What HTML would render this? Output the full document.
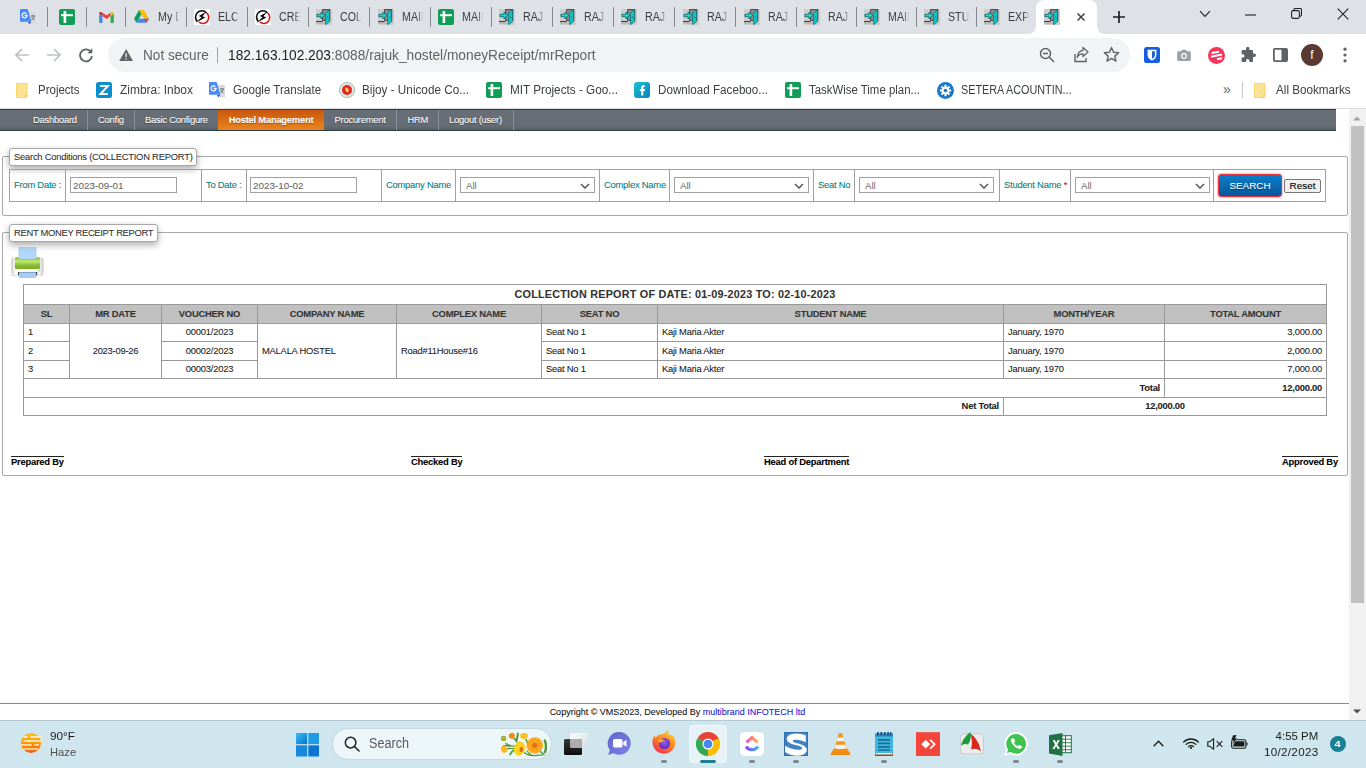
<!DOCTYPE html>
<html><head><meta charset="utf-8"><title>mrReport</title>
<style>
*{box-sizing:border-box;margin:0;padding:0}
html,body{width:1366px;height:768px;overflow:hidden;background:#fff;font-family:"Liberation Sans",Arial,sans-serif;}
.abs{position:absolute}
#tabstrip{position:absolute;left:0;top:0;width:1366px;height:34px;background:#dee1e6}
#toolbar{position:absolute;left:0;top:34px;width:1366px;height:74px;background:#fff}
.tab{position:absolute;top:0;height:34px;font-size:12px;color:#3c4043}
.tab .sep{position:absolute;left:0;top:8px;width:1px;height:19px;background:#80868b}
.tab .fav{position:absolute;top:9px;width:16px;height:16px}
.tab .tt{position:absolute;top:9px;left:40px;width:20px;overflow:hidden;white-space:nowrap;font-size:12.5px;line-height:16px;color:#3c4043;
 -webkit-mask-image:linear-gradient(90deg,#000 55%,transparent 100%);mask-image:linear-gradient(90deg,#000 55%,transparent 100%)}

.tsep{position:absolute;top:7px;width:1px;height:20px;background:#84888f}
.fav{position:absolute}
.tt{position:absolute;top:9px;height:16px;overflow:hidden;white-space:nowrap;font-size:12px;line-height:16px;color:#3c4043;transform:scaleX(.89);transform-origin:0 50%;-webkit-mask-image:linear-gradient(90deg,#000 72%,transparent 100%);mask-image:linear-gradient(90deg,#000 72%,transparent 100%)}
#atab{position:absolute;left:1036px;top:0;width:61px;height:34px;background:#fff;border-radius:8px 8px 0 0}
#atab .curveL{position:absolute;left:-8px;bottom:0}
#atab .curveR{position:absolute;right:-8px;bottom:0}
.ot{position:absolute;top:45px;transform-origin:0 50%;font-size:14px;line-height:20px;white-space:nowrap}
#avatar{left:1301px;top:44px;width:22px;height:22px;border-radius:11px;background:#5a3931;color:#fff;font-size:12px;line-height:23px;text-align:center}
#omni{position:absolute;left:108px;top:38px;width:1022px;height:34px;border-radius:17px;background:#f1f3f4}
.bm{position:absolute;top:82px;transform-origin:0 50%;font-size:12.3px;line-height:16px;color:#3c4043;white-space:nowrap}
.bmi{position:absolute;top:82px;width:16px;height:16px}
#page{position:absolute;left:0;top:108px;width:1349px;height:612px;background:#fff;overflow:hidden;-webkit-text-stroke:.08px;font-family:"Liberation Sans",Arial,sans-serif}
#menubar{position:absolute;left:0;top:1px;width:1336px;height:22px;background:linear-gradient(#676e76 0%,#666d75 78%,#595f66 100%);border-top:1px solid #2b3d48;border-bottom:1px solid #2b3d48}
.mi{position:absolute;top:0;height:20px;line-height:20px;font-size:9.4px;letter-spacing:-.225px;color:#fff;white-space:nowrap;text-shadow:0 1px 1px rgba(0,0,0,.4)}
.msep{position:absolute;top:0;width:1px;height:20px;background:#8d9299}
fieldset{position:absolute;border:1px solid #a9a9a9;border-radius:2px}
.legend{position:absolute;height:18px;line-height:16px;border:1px solid #a8a8a8;border-radius:3px;background:#fff;font-size:9.4px;letter-spacing:-.225px;color:#333;padding:0 3.5px 0 4px;white-space:nowrap;box-shadow:0 3px 7px rgba(0,0,0,.33)}

.mact{position:absolute;top:0;height:20px;background:linear-gradient(#c8560d,#e9861f);color:#fff;font-weight:bold;font-size:9.4px;letter-spacing:-.225px;line-height:20px;text-align:center;white-space:nowrap;text-shadow:0 1px 1px rgba(0,0,0,.35)}
#stable{position:absolute;left:9px;top:61px;width:1317px;height:33px}
.sc{position:absolute;top:0;height:33px;border:1px solid #a0a0a0}
.sl{position:absolute;top:0;line-height:30px;font-size:9.4px;letter-spacing:-.225px;color:#008080;white-space:nowrap}
.sl b{color:#e00;font-weight:normal}
.si{position:absolute;top:7px;width:107px;height:16px;border:1px solid #a0a0a0;font-family:"Liberation Sans",Arial,sans-serif;font-size:9.9px;color:#666;padding:0 2px;outline:none;background:#fff;border-radius:0}
.ss{position:absolute;top:7px;width:135px;height:16px;border:1px solid #a0a0a0;font-size:9.7px;line-height:15px;color:#777;padding-left:5px;background:#fff}
.ss svg{position:absolute;right:4px;top:4.5px;width:10px;height:6px}
.bsearch{position:absolute;left:4px;top:4px;width:64px;height:23px;border:1px solid #e8333a;border-radius:3px;background:linear-gradient(#0b7fcb,#04569b);color:#fff;font-family:"Liberation Sans",Arial,sans-serif;font-size:9.9px;text-shadow:0 1px 1px rgba(0,0,0,.4);box-shadow:0 0 2px #e8333a;padding:0}
.breset{position:absolute;left:70px;top:8.5px;width:37px;height:14.5px;border:1px solid #767676;border-radius:2px;background:#efefef;color:#000;font-family:"Liberation Sans",Arial,sans-serif;font-size:9.9px;padding:0;line-height:12px}
#foot{position:absolute;left:0;top:595px;width:1349px;height:17px;border-top:1px solid #8a8a8a;text-align:center;padding-left:6px;font-size:9px;line-height:17px;color:#111}
#foot a{color:#1a1ad6}

#rt{position:absolute;left:23px;top:176px;width:1304px;border-collapse:collapse;table-layout:fixed;font-size:9.4px;letter-spacing:-.225px;color:#222}
#rt td,#rt th{border:1px solid #999;padding:0 4px 2px;line-height:10px;text-align:left;vertical-align:middle;white-space:nowrap;overflow:hidden}
#rt .h19 td,#rt .h19 th{padding-bottom:1px}
#rt td[rowspan]{padding-bottom:.5px}
#rt th{background:#c0c0c0;text-align:center;font-weight:bold;color:#333}
#rt .c{text-align:center}#rt .r{text-align:right}#rt .b{font-weight:bold}
#rt .ttl{text-align:center;font-weight:bold;font-size:10.8px;letter-spacing:.225px;color:#333}
.sg{position:absolute;top:348px;font-size:9.4px;letter-spacing:-.225px;font-weight:bold;color:#000;border-top:1px solid #222;line-height:10px;white-space:nowrap}
#taskbar{position:absolute;left:0;top:720px;width:1366px;height:48px;background:#cfe6ee;box-shadow:inset 0 1px 0 #b4c8cf}
#scroll{position:absolute;left:1349px;top:109px;width:17px;height:611px;background:#f1f1f1}
#tbline{position:absolute;left:0;top:108px;width:1366px;height:1px;background:#dadce0}
</style></head><body>
<!--CHROME-START-->
<svg width="0" height="0" style="position:absolute"><defs>
<symbol id="door" viewBox="0 0 16 16"><rect width="16" height="16" fill="#cdcdcd"/><rect x="6.6" y=".6" width="7.2" height="10.8" fill="#8d8d8d" stroke="#3c3c3c" stroke-width=".9"/><path d="M0 12.6h6.6" stroke="#2e2e2e" stroke-width="1"/><path d="M0 14.2h9" stroke="#b5b5b5" stroke-width="1.4"/><path d="M9.3 4.2 L13.5 .7 V12.7 L9.7 15.6 Z" fill="#14c4c6" stroke="#087577" stroke-width=".8"/><circle cx="11.6" cy="8.3" r=".7" fill="#7a4a4a"/><path d="M.9 5.3h4.1V3.1l3.7 3.4L5 9.9V7.7H.9z" fill="#1ad9da" stroke="#0a6466" stroke-width=".8"/></symbol>
<symbol id="gx" viewBox="0 0 16 16"><rect width="16" height="16" rx="2" fill="#0f9d58"/><rect x="4.6" y="2" width="2.6" height="12" fill="#fff"/><rect x="2.1" y="5.2" width="11.9" height="2" fill="#fff"/></symbol>
<symbol id="bolt" viewBox="0 0 16 16"><rect width="16" height="16" fill="#fff"/><path d="M3.300 12.400 A6 6 0 0 1 12.400 3.700" fill="none" stroke="#0a0a0a" stroke-width="1.600"/><path d="M12.400 3.700 A6 6 0 0 1 5 13.200" fill="none" stroke="#e0141e" stroke-width="1.600"/><path d="M12.300 2.700 L4.800 7 L7.500 8.200 L1.900 13.700 L11.300 8.500 L8.500 7.300 Z" fill="#0a0a0a"/></symbol>
<symbol id="gtr" viewBox="0 0 16 16"><path d="M8.300 3H15a1 1 0 0 1 1 1v10.500a1 1 0 0 1-1 1H9.300z" fill="#d9dbde"/><path d="M8 12.800h3.300L9.300 15.300z" fill="#3846ad"/><path d="M1 0h6q.800 0 1 .800L11.300 12.800H1a1 1 0 0 1-1-1V1a1 1 0 0 1 1-1z" fill="#4a8af4"/><path d="M4.700 6.400h2.400a2.500 2.500 0 1 1-.800-1.900" fill="none" stroke="#fff" stroke-width="1.200"/><path d="M11 7h4M13 6v1M14.300 7c-.4 1.700-1.500 2.900-2.900 3.700M11.800 8.300c.6 1.100 1.500 1.900 2.700 2.500" fill="none" stroke="#5b6a73" stroke-width=".9"/></symbol>
<symbol id="gmail" viewBox="0 0 16 12"><path d="M0 1.500V11a1 1 0 0 0 1 1h2.600V4.200z" fill="#4285f4"/><path d="M16 1.500V11a1 1 0 0 1-1 1h-2.600V4.200z" fill="#34a853"/><path d="M3.600 4.200V8l4.400 3.300L12.400 8V4.200L8 7.500z" fill="#ea4335" transform="translate(0,-3.600)"/><path d="M0 1.500C0 .2 1.500-.5 2.500.3L3.600 1.100v3.100L0 1.600z" fill="#c5221f"/><path d="M16 1.500c0-1.300-1.500-2-2.500-1.200l-1.100.8v3.100L16 1.600z" fill="#fbbc04"/></symbol>
<symbol id="drive" viewBox="0 0 16 14"><path d="M5.400 0h5.200l5.400 9.300h-5.200z" fill="#fbbc04"/><path d="M5.400 0 0 9.300l2.600 4.500L8 4.500z" fill="#0f9d58"/><path d="M5.400 9.300h10.600l-2.600 4.500H2.600z" fill="#4285f4"/><path d="M10.800 9.300H16L13.400 13.800z" fill="#ea4335" opacity=".85"/></symbol>
<symbol id="fold" viewBox="0 0 12 15"><path d="M1.200 0h8.600A1.200 1.200 0 0 1 11 1.200v12.600a1.200 1.200 0 0 1-1.200 1.200H1.200A1.200 1.200 0 0 1 0 13.800V1.200A1.200 1.200 0 0 1 1.200 0z" fill="#fde293" stroke="#f9c846" stroke-width=".8"/><path d="M9 15v-2.600h2.400" fill="none" stroke="#f9c846" stroke-width=".8"/></symbol>
<symbol id="zim" viewBox="0 0 16 16"><rect width="16" height="16" rx="2.500" fill="#0a8fd0"/><path d="M4 4h8L4.400 12H12" fill="none" stroke="#fff" stroke-width="1.900"/></symbol>
<symbol id="bij" viewBox="0 0 16 16"><circle cx="8" cy="8" r="7.600" fill="#dfe8dc" stroke="#9bb39a" stroke-width=".8"/><circle cx="8" cy="8" r="5" fill="#e3242b"/><path d="M6.500 5.500l2 .5 1.500 2-1 2.500-2-1-.8-2z" fill="#f6d33c"/></symbol>
<symbol id="fb" viewBox="0 0 16 16"><defs><linearGradient id="fbg" x1="0" y1="0" x2="1" y2="1"><stop offset="0" stop-color="#19c3c9"/><stop offset="1" stop-color="#0b7fc4"/></linearGradient></defs><rect width="16" height="16" rx="3" fill="url(#fbg)"/><path d="M10.600 3.200h-1.300c-1.300 0-2 .8-2 2V7H5.800v1.900h1.500v4.500h2V8.900h1.500L11 7H9.300V5.600c0-.5.200-.7.700-.7h.9z" fill="#fff"/></symbol>
<symbol id="gear" viewBox="0 0 16 16"><circle cx="8" cy="8" r="8" fill="#1b78c8"/><g fill="#fff"><circle cx="8" cy="8" r="3.600"/><g id="tth"><rect x="7" y="2.700" width="2" height="10.600" rx=".4"/></g><rect x="7" y="2.700" width="2" height="10.600" rx=".4" transform="rotate(45 8 8)"/><rect x="7" y="2.700" width="2" height="10.600" rx=".4" transform="rotate(90 8 8)"/><rect x="7" y="2.700" width="2" height="10.600" rx=".4" transform="rotate(135 8 8)"/></g><circle cx="8" cy="8" r="1.700" fill="#1b78c8"/></symbol>
</defs></svg>
<div id="tabstrip">
<svg class="fav" style="left:20px;top:9px" width="16" height="16"><use href="#gtr"/></svg>
<div class="tsep" style="left:46.5px"></div>
<svg class="fav" style="left:59px;top:9px" width="16" height="16"><use href="#gx"/></svg>
<div class="tsep" style="left:86.0px"></div>
<svg class="fav" style="left:98.5px;top:12px" width="15" height="11"><use href="#gmail"/></svg>
<div class="tsep" style="left:124.5px"></div>
<svg class="fav" style="left:133.5px;top:10px" width="15" height="13"><use href="#drive"/></svg>
<div class="tt" style="left:157.5px;width:24px">My Drive</div>
<div class="tsep" style="left:185.5px"></div>
<svg class="fav" style="left:194.2px;top:9px" width="16" height="16"><use href="#bolt"/></svg>
<div class="tt" style="left:218.3px;width:24px">ELCOT</div>
<div class="tsep" style="left:246.5px"></div>
<svg class="fav" style="left:255.2px;top:9px" width="16" height="16"><use href="#bolt"/></svg>
<div class="tt" style="left:279.3px;width:24px">CREATE</div>
<div class="tsep" style="left:307.5px"></div>
<svg class="fav" style="left:316.2px;top:9px" width="16" height="16"><use href="#door"/></svg>
<div class="tt" style="left:340.3px;width:24px">COLLECTION</div>
<div class="tsep" style="left:369.0px"></div>
<svg class="fav" style="left:377.7px;top:9px" width="16" height="16"><use href="#door"/></svg>
<div class="tt" style="left:401.8px;width:24px">MAIN</div>
<div class="tsep" style="left:429.5px"></div>
<svg class="fav" style="left:438.2px;top:9px" width="16" height="16"><use href="#gx"/></svg>
<div class="tt" style="left:462.3px;width:24px">MAIN</div>
<div class="tsep" style="left:490.5px"></div>
<svg class="fav" style="left:499.2px;top:9px" width="16" height="16"><use href="#door"/></svg>
<div class="tt" style="left:523.3px;width:24px">RAJUK</div>
<div class="tsep" style="left:551.5px"></div>
<svg class="fav" style="left:560.2px;top:9px" width="16" height="16"><use href="#door"/></svg>
<div class="tt" style="left:584.3px;width:24px">RAJUK</div>
<div class="tsep" style="left:612.5px"></div>
<svg class="fav" style="left:621.2px;top:9px" width="16" height="16"><use href="#door"/></svg>
<div class="tt" style="left:645.3px;width:24px">RAJUK</div>
<div class="tsep" style="left:674.0px"></div>
<svg class="fav" style="left:682.7px;top:9px" width="16" height="16"><use href="#door"/></svg>
<div class="tt" style="left:706.8px;width:24px">RAJUK</div>
<div class="tsep" style="left:735.0px"></div>
<svg class="fav" style="left:743.7px;top:9px" width="16" height="16"><use href="#door"/></svg>
<div class="tt" style="left:767.8px;width:24px">RAJUK</div>
<div class="tsep" style="left:795.5px"></div>
<svg class="fav" style="left:804.2px;top:9px" width="16" height="16"><use href="#door"/></svg>
<div class="tt" style="left:828.3px;width:24px">RAJUK</div>
<div class="tsep" style="left:855.5px"></div>
<svg class="fav" style="left:864.2px;top:9px" width="16" height="16"><use href="#door"/></svg>
<div class="tt" style="left:888.3px;width:24px">MAIN</div>
<div class="tsep" style="left:915.5px"></div>
<svg class="fav" style="left:924.2px;top:9px" width="16" height="16"><use href="#door"/></svg>
<div class="tt" style="left:948.3px;width:24px">STUDENT</div>
<div class="tsep" style="left:975.5px"></div>
<svg class="fav" style="left:984.2px;top:9px" width="16" height="16"><use href="#door"/></svg>
<div class="tt" style="left:1008.3px;width:24px">EXPENSE</div>
<div id="atab"><svg class="curveL" width="8" height="8" viewBox="0 0 8 8"><path d="M8 0V8H0A8 8 0 0 0 8 0z" fill="#fff"/></svg><svg class="curveR" width="8" height="8" viewBox="0 0 8 8"><path d="M0 0V8H8A8 8 0 0 1 0 0z" fill="#fff"/></svg></div>
<svg class="fav" style="left:1044.4px;top:9px" width="16" height="16"><use href="#door"/></svg>
<svg class="abs" style="left:1076px;top:12px" width="10" height="10" viewBox="0 0 10 10"><path d="M1.500 1.500 8.500 8.500M8.500 1.500 1.500 8.500" stroke="#3c4043" stroke-width="1.500" fill="none"/></svg>
<svg class="abs" style="left:1112px;top:10px" width="14" height="14" viewBox="0 0 14 14"><path d="M7 1v12M1 7h12" stroke="#202124" stroke-width="1.700" fill="none"/></svg>
<svg class="abs" style="left:1199px;top:10px" width="12" height="8" viewBox="0 0 12 8"><path d="M1 1.200 6 6.400 11 1.200" stroke="#202124" stroke-width="1.100" fill="none"/></svg>
<svg class="abs" style="left:1245px;top:14px" width="11" height="2" viewBox="0 0 11 2"><path d="M0 1h11" stroke="#202124" stroke-width="1.100"/></svg>
<svg class="abs" style="left:1291px;top:8px" width="11" height="11" viewBox="0 0 11 11"><rect x=".6" y="2.600" width="7.800" height="7.800" rx="1.600" fill="none" stroke="#202124" stroke-width="1.100"/><path d="M2.800 2.400V2a1.500 1.500 0 0 1 1.500-1.500H9A1.500 1.500 0 0 1 10.500 2v4.700A1.500 1.500 0 0 1 9 8.200h-.5" fill="none" stroke="#202124" stroke-width="1.100"/></svg>
<svg class="abs" style="left:1337px;top:8px" width="12" height="12" viewBox="0 0 12 12"><path d="M.7.700 11.300 11.300M11.300.700.700 11.300" stroke="#202124" stroke-width="1.100" fill="none"/></svg>
</div>
<div id="toolbar"></div>
<svg class="abs" style="left:14px;top:47px" width="16" height="16" viewBox="0 0 16 16"><path d="M15 8H2M8 2 2 8l6 6" stroke="#bdc1c6" stroke-width="1.700" fill="none"/></svg>
<svg class="abs" style="left:46px;top:47px" width="16" height="16" viewBox="0 0 16 16"><path d="M1 8h13M8 2l6 6-6 6" stroke="#bdc1c6" stroke-width="1.700" fill="none"/></svg>
<svg class="abs" style="left:78px;top:47px" width="16" height="16" viewBox="0 0 16 16"><path d="M13.200 5.200A6 6 0 1 0 14 9.200" stroke="#5f6368" stroke-width="1.800" fill="none"/><path d="M14.300 1.300v5h-5z" fill="#5f6368"/></svg>
<div id="omni"></div>
<svg class="abs" style="left:118.700px;top:48.700px" width="14.300" height="12.300" viewBox="0 0 15 13"><path d="M7.500 0 15 13H0z" fill="#5f6368"/><path d="M7.500 4.600v4.200" stroke="#f1f3f4" stroke-width="1.400"/><circle cx="7.500" cy="10.600" r=".8" fill="#f1f3f4"/></svg>
<div class="ot" style="left:142.5px;color:#5f6368;transform:scaleX(.971)">Not secure</div>
<div class="abs" style="left:217px;top:47px;width:1px;height:16px;background:#9aa0a6"></div>
<div class="ot" style="left:228px;color:#5f6368;transform:scaleX(.98)"><span style="color:#202124">182.163.102.203</span>:8088/rajuk_hostel/moneyReceipt/mrReport</div>
<svg class="abs" style="left:1039px;top:47px" width="16" height="16" viewBox="0 0 16 16"><circle cx="6.500" cy="6.500" r="5" fill="none" stroke="#5f6368" stroke-width="1.500"/><path d="M10.300 10.300 15 15M4 6.500h5" stroke="#5f6368" stroke-width="1.500" fill="none"/></svg>
<svg class="abs" style="left:1072px;top:46px" width="17" height="17" viewBox="0 0 17 17"><path d="M3 8v7.500h11V12" fill="none" stroke="#5f6368" stroke-width="1.400"/><path d="M11 1.500 16 6l-5 4.500V7.800C8 7.800 6.300 9 5.200 11.500 5.500 7.500 7.500 4.800 11 4.300z" fill="none" stroke="#5f6368" stroke-width="1.300" stroke-linejoin="round"/></svg>
<svg class="abs" style="left:1103px;top:46px" width="17" height="17" viewBox="0 0 17 17"><path d="M8.500 1.500l2.100 4.700 5.100.5-3.900 3.400 1.200 5-4.500-2.700L4 15.100l1.200-5L1.300 6.700l5.100-.5z" fill="none" stroke="#5f6368" stroke-width="1.400" stroke-linejoin="round"/></svg>
<svg class="abs" style="left:1143.500px;top:47px" width="16" height="16" viewBox="0 0 16 16"><rect width="16" height="16" rx="2.500" fill="#175ddc"/><path d="M3.600 2.800h8.800v5.400c0 2.600-2.200 4.300-4.400 5.300-2.200-1-4.400-2.700-4.400-5.300z" fill="#fff"/><path d="M8 4.300h2.900v3.900c0 1.600-1.400 2.800-2.900 3.600z" fill="#175ddc"/></svg>
<svg class="abs" style="left:1177px;top:49px" width="14" height="12.500" viewBox="0 0 16 14"><path d="M1.500 2.500h3L5.700.800h4.600l1.200 1.700h3A1.300 1.300 0 0 1 15.800 3.800v8.400a1.300 1.300 0 0 1-1.300 1.300h-13A1.300 1.300 0 0 1 .2 12.200V3.800A1.300 1.300 0 0 1 1.500 2.500z" fill="#9aa0a6"/><circle cx="8" cy="7.800" r="3.300" fill="#fff"/><circle cx="8" cy="7.800" r="2" fill="#9aa0a6"/></svg>
<svg class="abs" style="left:1207.500px;top:46.500px" width="17" height="17" viewBox="0 0 17 17"><circle cx="8.500" cy="8.500" r="8.500" fill="#f4365c"/><path d="M3.500 6 11 4.700M3 9.800 14 7.500M9 12.300 14 11.200" stroke="#fff" stroke-width="2" fill="none"/></svg>
<svg class="abs" style="left:1240px;top:47px" width="16" height="16" viewBox="0 0 16 16"><path d="M6 1.600a1.700 1.700 0 0 1 3.400 0V3H12a1 1 0 0 1 1 1v2.600h1.300a1.700 1.700 0 0 1 0 3.400H13V14a1 1 0 0 1-1 1H9.400v-1.200a1.700 1.700 0 0 0-3.400 0V15H2.600a1 1 0 0 1-1-1v-3.400h1.200a1.700 1.700 0 0 0 0-3.400H1.600V4a1 1 0 0 1 1-1H6z" fill="#5f6368"/></svg>
<svg class="abs" style="left:1273px;top:48px" width="15" height="14" viewBox="0 0 15 14"><rect x=".9" y=".9" width="13.200" height="12.200" rx="1" fill="none" stroke="#5f6368" stroke-width="1.800"/><rect x="8.500" y=".9" width="5.600" height="12.200" fill="#5f6368"/></svg>
<div class="abs" id="avatar">f</div>
<svg class="abs" style="left:1343px;top:47px" width="4" height="16" viewBox="0 0 4 16"><circle cx="2" cy="2.200" r="1.600" fill="#5f6368"/><circle cx="2" cy="8" r="1.600" fill="#5f6368"/><circle cx="2" cy="13.800" r="1.600" fill="#5f6368"/></svg>
<svg class="abs" style="left:16px;top:82.5px" width="12" height="15"><use href="#fold"/></svg>
<div class="bm" style="left:38px;transform:scaleX(0.9347)">Projects</div>
<svg class="abs" style="left:96px;top:82px" width="16" height="16"><use href="#zim"/></svg>
<div class="bm" style="left:119.5px;transform:scaleX(0.9707)">Zimbra: Inbox</div>
<svg class="abs" style="left:208.5px;top:82px" width="16" height="16"><use href="#gtr"/></svg>
<div class="bm" style="left:232.5px;transform:scaleX(0.9418)">Google Translate</div>
<svg class="abs" style="left:338.5px;top:82px" width="16" height="16"><use href="#bij"/></svg>
<div class="bm" style="left:362px;transform:scaleX(0.9545)">Bijoy - Unicode Co...</div>
<svg class="abs" style="left:485.5px;top:82px" width="16" height="16"><use href="#gx"/></svg>
<div class="bm" style="left:510px;transform:scaleX(0.9541)">MIT Projects - Goo...</div>
<svg class="abs" style="left:633.5px;top:82px" width="16" height="16"><use href="#fb"/></svg>
<div class="bm" style="left:658px;transform:scaleX(0.9466)">Download Faceboo...</div>
<svg class="abs" style="left:785px;top:82px" width="16" height="16"><use href="#gx"/></svg>
<div class="bm" style="left:809px;transform:scaleX(0.9281)">TaskWise Time plan...</div>
<svg class="abs" style="left:936.5px;top:81.5px" width="17" height="17"><use href="#gear"/></svg>
<div class="bm" style="left:961px;transform:scaleX(0.8791)">SETERA ACOUNTIN...</div>
<div class="bm" style="left:1223px;font-size:14px;top:81px;color:#5f6368">»</div>
<div class="abs" style="left:1242px;top:82px;width:1px;height:16px;background:#c4c7cc"></div>
<svg class="abs" style="left:1253.5px;top:82.5px" width="12" height="15"><use href="#fold"/></svg>
<div class="bm" style="left:1276.3px;transform:scaleX(0.9504)">All Bookmarks</div>
<!--CHROME-END-->
<div id="page">
 <div id="menubar">
  <div class="mi" style="left:33px">Dashboard</div><div class="msep" style="left:87px"></div>
  <div class="mi" style="left:98px">Config</div><div class="msep" style="left:134px"></div>
  <div class="mi" style="left:145px">Basic Configure</div>
  <div class="mact" style="left:218px;width:106px"><span>Hostel Management</span></div>
  <div class="mi" style="left:334.5px">Procurement</div><div class="msep" style="left:396px"></div>
  <div class="mi" style="left:407.5px">HRM</div><div class="msep" style="left:438px"></div>
  <div class="mi" style="left:449px">Logout (user)</div><div class="msep" style="left:513px"></div>
 </div>

 <fieldset style="left:2px;top:48px;width:1346px;height:60px"></fieldset>
 <div class="legend" style="left:9px;top:40px">Search Conditions (COLLECTION REPORT)</div>
 <div id="stable">
  <div class="sc" style="left:0;width:57px"><label class="sl" style="left:4px">From Date :</label></div>
  <div class="sc" style="left:56px;width:137px"><input class="si" style="left:4px" value="2023-09-01"></div>
  <div class="sc" style="left:192px;width:46px"><label class="sl" style="left:4px">To Date :</label></div>
  <div class="sc" style="left:237px;width:136px"><input class="si" style="left:3px" value="2023-10-02"></div>
  <div class="sc" style="left:372px;width:75px"><label class="sl" style="left:4px">Company Name</label></div>
  <div class="sc" style="left:446px;width:145px"><div class="ss" style="left:4px">All<svg viewBox="0 0 10 6"><path d="M1 1 L5 5 L9 1" fill="none" stroke="#5a6068" stroke-width="1.6"/></svg></div></div>
  <div class="sc" style="left:590px;width:71px"><label class="sl" style="left:4px">Complex Name</label></div>
  <div class="sc" style="left:660px;width:145px"><div class="ss" style="left:4px">All<svg viewBox="0 0 10 6"><path d="M1 1 L5 5 L9 1" fill="none" stroke="#5a6068" stroke-width="1.6"/></svg></div></div>
  <div class="sc" style="left:804px;width:42px"><label class="sl" style="left:4px">Seat No</label></div>
  <div class="sc" style="left:845px;width:146px"><div class="ss" style="left:4px">All<svg viewBox="0 0 10 6"><path d="M1 1 L5 5 L9 1" fill="none" stroke="#5a6068" stroke-width="1.6"/></svg></div></div>
  <div class="sc" style="left:990px;width:72px"><label class="sl" style="left:4px">Student Name <b>*</b></label></div>
  <div class="sc" style="left:1061px;width:144px"><div class="ss" style="left:4px">All<svg viewBox="0 0 10 6"><path d="M1 1 L5 5 L9 1" fill="none" stroke="#5a6068" stroke-width="1.6"/></svg></div></div>
  <div class="sc" style="left:1204px;width:113px"><button class="bsearch">SEARCH</button><button class="breset">Reset</button></div>
 </div>

 <fieldset style="left:2px;top:124px;width:1346px;height:244px"></fieldset>
 <div class="legend" style="left:9px;top:116px;letter-spacing:-.3px">RENT MONEY RECEIPT REPORT</div>
 <svg id="prn" viewBox="0 0 36 33" width="36" height="33" style="position:absolute;left:9px;top:139px">
  <defs>
   <linearGradient id="pb" x1="0" x2="1" y1="0" y2="0"><stop offset="0" stop-color="#c9c9c9"/><stop offset=".12" stop-color="#fbfbfb"/><stop offset=".88" stop-color="#f4f4f4"/><stop offset="1" stop-color="#c4c4c4"/></linearGradient>
   <linearGradient id="pg" x1="0" x2="0" y1="0" y2="1"><stop offset="0" stop-color="#86bf2f"/><stop offset=".35" stop-color="#bfe96f"/><stop offset=".7" stop-color="#86bd33"/><stop offset="1" stop-color="#78ad2a"/></linearGradient>
   <linearGradient id="pp" x1="0" x2="0" y1="0" y2="1"><stop offset="0" stop-color="#a9cff6"/><stop offset="1" stop-color="#b9dbfa"/></linearGradient>
  </defs>
  <ellipse cx="18" cy="28.3" rx="17.5" ry="1.2" fill="#000" opacity=".13"/>
  <rect x="2.2" y="10" width="32.3" height="18.3" rx="3.5" fill="url(#pb)"/>
  <rect x="5.9" y="10.2" width="25.1" height="11.8" rx="1.2" fill="url(#pg)"/>
  <rect x="10" y="0.2" width="17" height="11.8" fill="url(#pp)" stroke="#93bdf0" stroke-width=".6"/>
  <rect x="9" y="25" width="19.2" height="3.3" fill="#3a3f47"/>
  <rect x="10" y="25.3" width="17" height="5.7" fill="#a5cdf7"/>
  <circle cx="30.5" cy="23.6" r=".7" fill="#7cc03a"/>
 </svg>
 <table id="rt" cellspacing="0">
  <colgroup><col style="width:46px"><col style="width:92px"><col style="width:96px"><col style="width:139px"><col style="width:145px"><col style="width:116px"><col style="width:346px"><col style="width:161px"><col style="width:162px"></colgroup>
  <tr style="height:20px"><td colspan="9" class="ttl">COLLECTION REPORT OF DATE: 01-09-2023 TO: 02-10-2023</td></tr>
  <tr class="h19" style="height:19px"><th>SL</th><th>MR DATE</th><th>VOUCHER NO</th><th>COMPANY NAME</th><th>COMPLEX NAME</th><th>SEAT NO</th><th>STUDENT NAME</th><th>MONTH/YEAR</th><th>TOTAL AMOUNT</th></tr>
  <tr style="height:18px"><td>1</td><td rowspan="3" class="c">2023-09-26</td><td class="c">00001/2023</td><td rowspan="3">MALALA HOSTEL</td><td rowspan="3">Road#11House#16</td><td>Seat No 1</td><td>Kaji Maria Akter</td><td>January, 1970</td><td class="r">3,000.00</td></tr>
  <tr class="h19" style="height:19px"><td>2</td><td class="c">00002/2023</td><td>Seat No 1</td><td>Kaji Maria Akter</td><td>January, 1970</td><td class="r">2,000.00</td></tr>
  <tr style="height:18px"><td>3</td><td class="c">00003/2023</td><td>Seat No 1</td><td>Kaji Maria Akter</td><td>January, 1970</td><td class="r">7,000.00</td></tr>
  <tr class="h19" style="height:19px"><td colspan="8" class="r b">Total</td><td class="r b">12,000.00</td></tr>
  <tr style="height:18px"><td colspan="7" class="r b">Net Total</td><td colspan="2" class="c b">12,000.00</td></tr>
 </table>
 <div class="sg" style="left:11px">Prepared By</div>
 <div class="sg" style="left:411px">Checked By</div>
 <div class="sg" style="left:764px">Head of Department</div>
 <div class="sg" style="left:1282px">Approved By</div>
 <div id="foot"><span>Copyright © VMS2023, Developed By <a>multibrand INFOTECH ltd</a></span></div>
</div>
<div id="tbline"></div>
<div id="scroll"><svg class="abs" style="left:4px;top:6.500px" width="8" height="5" viewBox="0 0 8 5"><path d="M0 4.500 4 .5 8 4.500z" fill="#a3a3a3"/></svg><div class="abs" style="left:2px;top:17px;width:13px;height:477px;background:#c1c1c1"></div><svg class="abs" style="left:4px;top:599.500px" width="8" height="5" viewBox="0 0 8 5"><path d="M0 .5 4 4.500 8 .5z" fill="#505050"/></svg></div>
<!--TASK-START-->
<div id="taskbar">
<svg class="abs" style="left:19px;top:12px" width="25" height="22" viewBox="0 0 25 22"><defs><linearGradient id="sun" x1="0" y1="0" x2="0" y2="1"><stop offset="0" stop-color="#ffc414"/><stop offset=".55" stop-color="#f9930f"/><stop offset="1" stop-color="#ee5f12"/></linearGradient></defs><circle cx="12" cy="10.900" r="10" fill="url(#sun)"/><g stroke="#fcebc6" stroke-width="1.700"><path d="M4.400 4.900h4.200M11.200 4.900h12.600"/><path d="M4.400 9h19.100"/><path d="M.1 12.900h12.700M15.300 12.900h4.500" stroke="#f9dfa6"/><path d="M.1 17h19" stroke="#f6dba4"/></g></svg>
<div class="abs" style="left:49.500px;top:7.800px;font-size:10.800px;line-height:16px;color:#1b1b1b;transform:scaleX(1.085);transform-origin:0 50%">90°F</div>
<div class="abs" style="left:49.500px;top:23.700px;font-size:10.800px;line-height:16px;color:#4e4e4e;transform:scaleX(1.04);transform-origin:0 50%">Haze</div>
<svg class="abs" style="left:295.500px;top:13px" width="23.500" height="23.500" viewBox="0 0 24 24"><defs><linearGradient id="wl" x1="0" y1="0" x2="1" y2="1"><stop offset="0" stop-color="#35c1f1"/><stop offset="1" stop-color="#0a6fd0"/></linearGradient></defs><rect x="0" y="0" width="11.400" height="11.400" fill="url(#wl)"/><rect x="12.600" y="0" width="11.400" height="11.400" fill="#1e9be6"/><rect x="0" y="12.600" width="11.400" height="11.400" fill="#1788dc"/><rect x="12.600" y="12.600" width="11.400" height="11.400" fill="#0c74d3"/></svg>
<div class="abs" style="left:332px;top:8px;width:220px;height:31.500px;border-radius:16px;background:#edf6f9;border:1px solid #c3d8df"></div>
<svg class="abs" style="left:343.500px;top:15.500px" width="16" height="16" viewBox="0 0 16 16"><circle cx="6.600" cy="6.600" r="5.300" fill="none" stroke="#222" stroke-width="1.500"/><path d="M10.500 10.500 15 15" stroke="#222" stroke-width="1.600" stroke-linecap="round"/></svg>
<div class="abs" style="left:369px;top:15px;font-size:13.800px;line-height:18px;color:#5a5a5a;transform:scaleX(.915);transform-origin:0 50%">Search</div>
<svg class="abs" style="left:498px;top:10px" width="52" height="28" viewBox="0 0 52 28"><g fill="none" stroke="#4f9a3c" stroke-linecap="round"><path d="M8 13.500c3 2.500 7 3 12 2.800" stroke-width="1.300"/><path d="M5.500 16c2-.8 4-.5 6 .3" stroke-width="1.600"/><path d="M9 18.800c3-.6 5.500-.6 8-.3" stroke-width="1.200"/><path d="M12 24.500c1.500-2.500 3-4 5-5.200" stroke-width="1.700"/><path d="M19.800 3.600c-.2 3-.8 5.500-1.500 8" stroke-width="2"/><path d="M26.500 22.800c4 4 11 3.200 18 2" stroke-width="1.300"/><path d="M29 21c1 2 2.500 3.200 4.500 4" stroke-width="1.200"/><path d="M42.500 21.500l3.500 3" stroke-width="1.600"/><path d="M46.800 10.500c1.500 4 1.500 8 .3 11.500" stroke-width="2.400"/><path d="M28 9.500l1.500 3.500" stroke-width="1.600"/><path d="M16 8.500l2 1.500" stroke-width="1.600"/></g><circle cx="5.600" cy="8.400" r="2.600" fill="#93ab38"/><circle cx="5.600" cy="8.200" r="1.100" fill="#d9b52a"/><ellipse cx="13.800" cy="5.800" rx="3.100" ry="2.900" fill="#ef8a1e" transform="rotate(-25 13.800 5.800)"/><ellipse cx="26" cy="6" rx="3.900" ry="3" fill="#fbc21f" transform="rotate(-12 26 6)"/><ellipse cx="6" cy="19.200" rx="3" ry="3.700" fill="#fbb51f" transform="rotate(-15 6 19.200)"/><ellipse cx="21.500" cy="18.500" rx="5.500" ry="7.200" fill="#fcd01f" transform="rotate(12 21.500 18.500)"/><ellipse cx="23.300" cy="19.500" rx="1.700" ry="2.600" fill="#d9691a" transform="rotate(12 23.300 19.500)"/><circle cx="36.800" cy="15.500" r="7" fill="#fbae1d"/><circle cx="36.800" cy="15.500" r="7.300" fill="none" stroke="#fbae1d" stroke-width="2.200" stroke-dasharray="2.100 .770"/><g stroke="#f58c1a" stroke-width=".6"><path d="M36.800 7.500v16M28.800 15.500h16M31.100 9.800l11.400 11.400M42.500 9.800 31.100 21.200M33.700 8.100l6.200 14.800M39.900 8.100l-6.200 14.800M29.400 12.400l14.800 6.200M29.400 18.600l14.800-6.200"/></g><circle cx="36.800" cy="15.500" r="2.400" fill="#e26d1c"/></svg>
<svg class="abs" style="left:563px;top:12px" width="26" height="24" viewBox="0 0 26 24"><defs><linearGradient id="tv1" x1="0" y1="0" x2="1" y2="1"><stop offset="0" stop-color="#fff"/><stop offset="1" stop-color="#d9dde0"/></linearGradient><linearGradient id="tv2" x1="0" y1="0" x2="0" y2="1"><stop offset="0" stop-color="#3a3a3a"/><stop offset="1" stop-color="#0c0c0c"/></linearGradient></defs><rect x="1" y="7" width="18" height="16" rx="1.500" fill="url(#tv2)"/><rect x="7.200" y="1" width="17.300" height="15" rx="1.500" fill="url(#tv1)" opacity=".93"/><rect x="7.200" y="7" width="11.800" height="9" fill="#9a9c9e" opacity=".75"/></svg>
<svg class="abs" style="left:607px;top:11px" width="25" height="25" viewBox="0 0 25 25"><defs><linearGradient id="ch" x1="0" y1="0" x2="1" y2="1"><stop offset="0" stop-color="#6264c9"/><stop offset="1" stop-color="#7b83eb"/></linearGradient></defs><path d="M12.500 1A11.400 11.400 0 1 1 6.500 22.200L1.200 24l1.600-5A11.400 11.400 0 0 1 12.500 1z" fill="url(#ch)"/><rect x="6" y="8" width="9.500" height="8.500" rx="1.500" fill="#fff"/><path d="M16.200 11 19.500 8.800v7L16.200 13.600z" fill="#fff"/></svg>
<svg class="abs" style="left:652px;top:10px" width="24" height="26" viewBox="0 0 24 26"><defs><linearGradient id="ff" x1=".8" y1="0" x2=".2" y2="1"><stop offset="0" stop-color="#ffd43a"/><stop offset=".45" stop-color="#ff8a1f"/><stop offset="1" stop-color="#f0285a"/></linearGradient><radialGradient id="ff2" cx=".5" cy=".4" r=".6"><stop offset="0" stop-color="#9b5cf5"/><stop offset="1" stop-color="#5a2bb8"/></radialGradient></defs><path d="M15 0c1.500 1.500 2 3.500 1.600 5 2.400-.8 4.800 1 6 3.500 2.400 5-.3 11-5 13.800-5.500 3-12.500 1.200-15.500-4.300C-.4 13.600 0 8.500 2.800 5.200c0 1.200.3 2 .9 2.700C4.700 6 6.500 4.800 8.500 4.600 11.500 4.500 14 2.500 15 0z" fill="url(#ff)"/><circle cx="12.500" cy="13.500" r="5.600" fill="url(#ff2)"/><path d="M5.500 10.500c2-1.700 5.500-1.600 7.500.5-1.800-.3-3 .3-3.600 1.500-1.600.2-3.200-.6-3.900-2z" fill="#ffb02e"/></svg>
<div class="abs" style="left:661.0px;top:40px;width:6px;height:3px;border-radius:1.5px;background:#7d898e"></div>
<div class="abs" style="left:688.500px;top:4.500px;width:38.500px;height:38.500px;border-radius:4px;background:#e6f2f6;border:1px solid #eef7fa"></div>
<svg class="abs" style="left:695.700px;top:11.500px" width="24" height="24" viewBox="0 0 48 48"><path d="M24 24 3.200 12A24 24 0 0 1 44.800 12z" fill="#ea4335"/><path d="M24 24 44.800 12A24 24 0 0 1 24 48z" fill="#fbbc04"/><path d="M24 24 24 48A24 24 0 0 1 3.200 12z" fill="#34a853"/><path d="M24 13h20.300" stroke="#ea4335" stroke-width="2" /><circle cx="24" cy="24" r="11" fill="#fff"/><circle cx="24" cy="24" r="8.700" fill="#4285f4"/></svg>
<div class="abs" style="left:699.9px;top:40px;width:16px;height:3px;border-radius:1.5px;background:#1e7f93"></div>
<svg class="abs" style="left:740px;top:11.500px" width="24" height="24" viewBox="0 0 24 24"><defs><linearGradient id="cu1" x1="0" y1="0" x2="1" y2="0"><stop offset="0" stop-color="#ff4fb8"/><stop offset="1" stop-color="#ffb13d"/></linearGradient><linearGradient id="cu2" x1="0" y1="0" x2="1" y2="0"><stop offset="0" stop-color="#8a3ffc"/><stop offset="1" stop-color="#39b7ff"/></linearGradient></defs><rect width="24" height="24" rx="4.500" fill="#fff"/><path d="M6.500 10.300 12 5.500l5.500 4.800" fill="none" stroke="url(#cu1)" stroke-width="3"/><path d="M6 14.800c3.300 4 8.700 4 12 0" fill="none" stroke="url(#cu2)" stroke-width="3"/></svg>
<div class="abs" style="left:748.7px;top:40px;width:6px;height:3px;border-radius:1.5px;background:#7d898e"></div>
<svg class="abs" style="left:783.800px;top:11.500px" width="24.400" height="24.400" viewBox="0 0 24 24"><rect width="24" height="24" fill="#3f82c4"/><rect x=".5" y=".5" width="23" height="23" fill="none" stroke="#2f6cab"/><path d="M21.500 3.500C17 .8 5 .2 3 5.500c-2 5.500 7 7 12.500 8.500 3.500 1 3 3.500-1 3.500-4.500 0-9-1.500-13.500-4V20c5 3.500 18 5.500 21-.5 2.500-5.500-5-7.500-11-9-3.500-1-3-2.800.5-2.800 3.500 0 7 1 10 2.500z" fill="#fff"/></svg>
<div class="abs" style="left:792.8px;top:40px;width:6px;height:3px;border-radius:1.5px;background:#7d898e"></div>
<svg class="abs" style="left:829.500px;top:12px" width="21" height="23" viewBox="0 0 21 23"><path d="M3.500 17h14l3 5.200c.2.400 0 .8-.5.800H1c-.5 0-.7-.4-.5-.8z" fill="#f08a12"/><path d="M9 1h3l5 16.500c-2 1.600-11 1.600-13 0z" fill="#f6931c"/><path d="M7.700 5.400h5.600l1.200 3.900H6.500zM5.500 12.700h10l1 3.500c-3 1-9 1-12 0z" fill="#f3f3f3"/></svg>
<svg class="abs" style="left:875px;top:11.500px" width="18" height="24.500" viewBox="0 0 18 24.500"><rect x="0" y="20" width="18" height="4.500" rx="1" fill="#8a4a1c"/><rect x=".5" y="20.500" width="17" height="2" fill="#f2e8d8"/><rect x="0" y="1.500" width="18" height="19.500" rx="1.500" fill="#41b6e0"/><rect x="0" y="1.500" width="18" height="3" fill="#2d8fbd"/><g fill="#1d4f8f"><rect x="2" y="0" width="1.800" height="3.500"/><rect x="5.400" y="0" width="1.800" height="3.500"/><rect x="8.800" y="0" width="1.800" height="3.500"/><rect x="12.200" y="0" width="1.800" height="3.500"/><rect x="15" y="0" width="1.500" height="3.500"/></g><g fill="#1a6e9e"><rect x="3" y="7" width="12" height="1.800"/><rect x="3" y="10.500" width="12" height="1.800"/><rect x="3" y="14" width="12" height="1.800"/><rect x="3" y="17.300" width="12" height="1.500"/></g></svg>
<div class="abs" style="left:880.8px;top:40px;width:6px;height:3px;border-radius:1.5px;background:#7d898e"></div>
<svg class="abs" style="left:916px;top:11.500px" width="24" height="24.400" viewBox="0 0 24 24"><rect width="24" height="24" fill="#f4453a"/><path d="M9.700 7.600 14.100 12 9.700 16.400 5.300 12z" fill="#fff"/><path d="M14.200 7.600 18.600 12 14.200 16.400" fill="none" stroke="#fff" stroke-width="1.800"/></svg>
<svg class="abs" style="left:960px;top:12px" width="24" height="23" viewBox="0 0 24 23"><rect x=".5" y="1.800" width="23" height="20.200" rx="3.500" fill="#ececec" stroke="#c9c9c9"/><path d="M10.200 1.500C15.500 5 19.500 11 20.800 19.500 18 16.800 14.500 16 11 17.500 12.500 12 12.200 6.500 10.200 1.500z" fill="#d9281e"/><path d="M10.500.3C11.500 5 10.500 9.500 8 12.500 5.800 11.500 3.500 11.800 1 13.500 2.500 8 6 3 10.500.3z" fill="#1f9a3c"/></svg>
<svg class="abs" style="left:1004px;top:12px" width="24" height="24" viewBox="0 0 24 24"><path d="M12.300.300A11.600 11.600 0 1 1 6.300 21.900L.300 23.700l1.800-5.800A11.600 11.600 0 0 1 12.300.300z" fill="#fff"/><path d="M12.300 2.100A9.800 9.800 0 1 1 6.700 20L2.900 21.100l1.200-3.600A9.800 9.800 0 0 1 12.300 2.100z" fill="#41c351"/><path d="M8.600 6.500c.5-.5 1.200-.4 1.500.2l.9 1.900c.2.400.1.900-.3 1.200l-.7.700c.8 1.700 2.100 3 3.800 3.800l.7-.8c.3-.4.800-.5 1.200-.3l1.900.9c.6.300.7 1 .3 1.500-.9 1.200-2.400 1.500-3.800 1-3.300-1.100-5.900-3.700-7-7-.4-1.200-.1-2.300.5-3.100z" fill="#fff"/></svg>
<div class="abs" style="left:1013.0px;top:40px;width:6px;height:3px;border-radius:1.5px;background:#7d898e"></div>
<svg class="abs" style="left:1048.500px;top:12.500px" width="23" height="23" viewBox="0 0 23 23"><rect x="11" y="2.700" width="11.300" height="17" fill="#fff" stroke="#207245" stroke-width="1"/><g stroke="#207245" stroke-width=".9"><path d="M11 6.200h11M11 9.700h11M11 13.200h11M11 16.700h11M16.500 2.700v17"/></g><path d="M0 2.300 13.500 0v23L0 20.600z" fill="#207245"/><path d="M3.600 7l2.200 0 1.400 3 1.500-3 2.100 0-2.500 4.500 2.600 4.600-2.200 0-1.600-3.200-1.600 3.200-2.100 0 2.600-4.600z" fill="#fff"/></svg>
<div class="abs" style="left:1056.8px;top:40px;width:6px;height:3px;border-radius:1.5px;background:#7d898e"></div>
<svg class="abs" style="left:1153.200px;top:20px" width="11" height="7" viewBox="0 0 11 7"><path d="M.7 6.200 5.500 1.200 10.300 6.200" fill="none" stroke="#1b1b1b" stroke-width="1.300"/></svg>
<svg class="abs" style="left:1183px;top:18px" width="16" height="11" viewBox="0 0 16 11"><g fill="none" stroke="#1b1b1b" stroke-width="1.300" stroke-linecap="round"><path d="M.7 4a10.400 10.400 0 0 1 14.600 0"/><path d="M3.100 6.400a6.900 6.900 0 0 1 9.800 0"/><path d="M5.500 8.600a3.500 3.500 0 0 1 5 0"/></g><circle cx="8" cy="9.800" r="1.150" fill="#1b1b1b"/></svg>
<svg class="abs" style="left:1206.500px;top:18px" width="16" height="12" viewBox="0 0 16 12"><path d="M.8 3.700h2.200L6.600.700v10.600L3 8.300H.8z" fill="none" stroke="#1b1b1b" stroke-width="1.100" stroke-linejoin="round"/><path d="M9.700 3.200 15.300 8.800M15.300 3.200 9.700 8.800" stroke="#1b1b1b" stroke-width="1.050" fill="none"/></svg>
<svg class="abs" style="left:1230.500px;top:15px" width="17" height="15" viewBox="0 0 17 15"><rect x=".7" y="4.700" width="14.200" height="8.500" rx="1.800" fill="none" stroke="#1b1b1b" stroke-width="1.150"/><path d="M4.200 6.300h8.500a.7.700 0 0 1 .7.700v3.900a.7.700 0 0 1-.7.700H3a.7.700 0 0 1-.7-.7v-.6z" fill="#1b1b1b"/><path d="M15.400 7.500h.4a.7.700 0 0 1 .7.700v1.500a.7.700 0 0 1-.7.700h-.4z" fill="#1b1b1b"/><path d="M2 0 0 5.600h2.400L1.500 9.500 6.600 3.300H4.100L6 0z" fill="#1b1b1b" stroke="#cfe6ee" stroke-width=".4"/></svg>
<div class="abs" style="left:1240px;width:78.500px;top:7.700px;font-size:10.800px;line-height:16px;color:#1b1b1b;text-align:right;white-space:nowrap"><span style="display:inline-block;transform:scaleX(1.06);transform-origin:100% 50%">4:55 PM</span></div>
<div class="abs" style="left:1240px;width:78.500px;top:23.600px;font-size:10.800px;line-height:16px;color:#1b1b1b;text-align:right;white-space:nowrap"><span style="display:inline-block;letter-spacing:.27px;margin-right:-.27px;transform:scaleX(1.08);transform-origin:100% 50%">10/2/2023</span></div>
<div class="abs" style="left:1330px;top:16px;width:16px;height:16px;border-radius:8px;background:#1b8093;color:#fff;font-size:9.500px;font-weight:bold;line-height:16px;text-align:center"><span style="display:inline-block;transform:scaleX(1.15)">4</span></div>
</div>
<!--TASK-END-->
</body></html>
